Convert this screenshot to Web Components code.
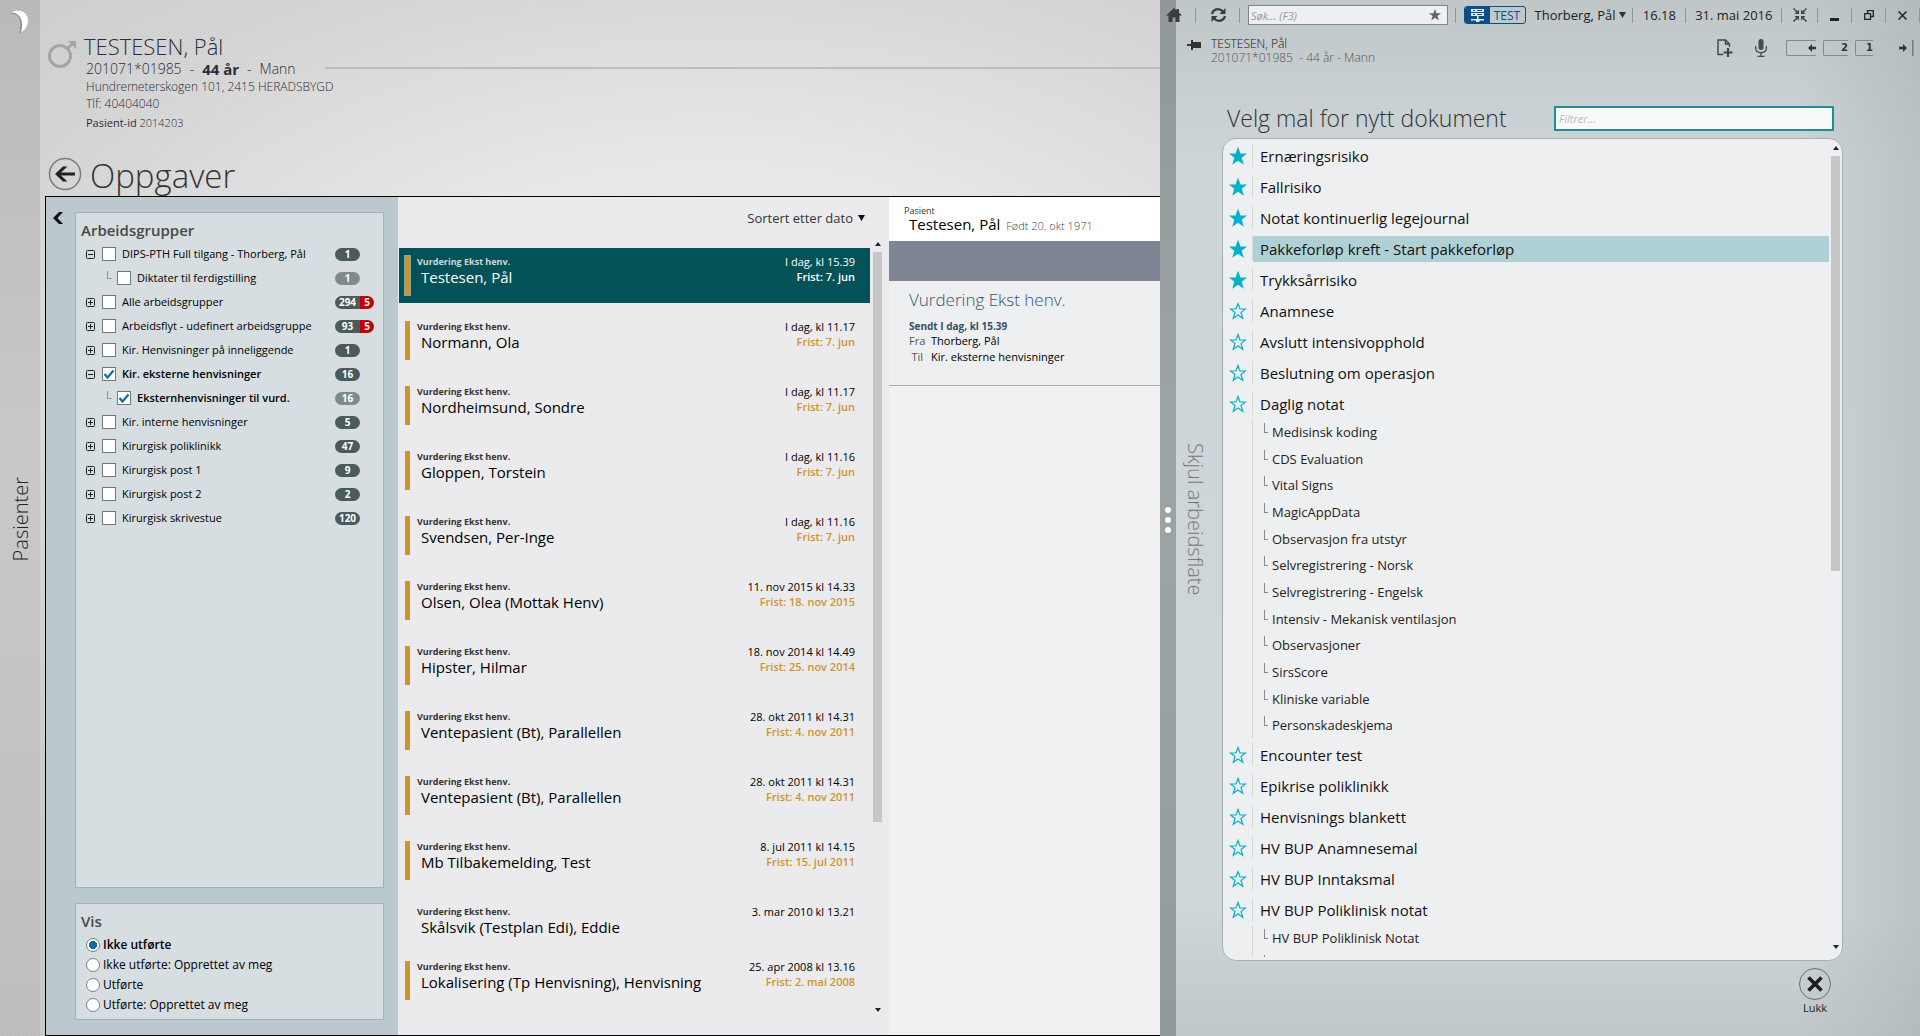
<!DOCTYPE html>
<html lang="no">
<head>
<meta charset="utf-8">
<title>Oppgaver</title>
<style>
html, body { height: 100%; margin: 0; }
body { font-family: "Open Sans", "Noto Sans", sans-serif; font-size: 11px; color: #000; overflow: hidden; }
</style>
</head>
<body>
<journal-app></journal-app>
<script>
const RESET = `
*, *::before, *::after { box-sizing: border-box; }
button, input { font: inherit; color: inherit; margin: 0; }
button { background: none; border: 0; padding: 0; text-align: left; cursor: pointer; }
a { color: inherit; text-decoration: none; }
svg { display: block; }
h1, h2, p { margin: 0; font-weight: inherit; font-size: inherit; }
`;
class Base extends HTMLElement {
  connectedCallback() {
    if (this.shadowRoot) return;
    this.attachShadow({ mode: 'open' }).innerHTML =
      `<style>${RESET}${this.css()}</style>${this.html()}`;
  }
  css() { return ':host{display:block}'; }
  html() { return '<slot></slot>'; }
  at(name) { return this.getAttribute(name) || ''; }
}
const DOTS = 'conic-gradient(from 270deg at 1px 1px, rgba(0,0,0,.05) 90deg, transparent 0) 0 0/4px 4px, conic-gradient(from 270deg at 1px 1px, rgba(0,0,0,.05) 90deg, transparent 0) 2px 2px/4px 4px';

/* ---- application shell ---- */
customElements.define('journal-app', class extends Base {
  css() { return `
    :host { display: grid; grid-template-columns: 40px minmax(0, 1fr) 16px 744px; height: 100vh; }
    main { display: flex; flex-direction: column; min-height: 0;
      background: ${DOTS}, radial-gradient(ellipse 1100px 600px at 60% 35%, #f0f0f0 0%, #e8e8e8 35%, #d6d6d6 68%, #cbcbcb 100%); }
    work-frame { flex: 1; min-height: 0; margin: 0 0 0 5px; }`; }
  html() { return `
    <side-rail label="Pasienter"></side-rail>
    <main>
      <patient-header></patient-header>
      <page-title>Oppgaver</page-title>
      <work-frame></work-frame>
    </main>
    <pane-splitter></pane-splitter>
    <document-pane></document-pane>`; }
});

customElements.define('side-rail', class extends Base {
  css() { return `
    :host { display: flex; flex-direction: column; background: ${DOTS}, linear-gradient(#bbbbbb, #cacaca 45%, #bfbfbf); }
    svg { margin: 9px 0 0 8px; }
    button { flex: 1; margin-bottom: 32px; width: 40px; display: flex; align-items: center; justify-content: center;
      font-size: 20px; font-weight: 300; line-height: 22px; color: #222; padding-left: 2px; }
    span { writing-mode: vertical-rl; transform: rotate(180deg); }`; }
  html() { return `
    <svg width="22" height="26" viewBox="0 0 22 26">
      <path d="M1 6C9 3 15 9 11 25C20 17 16 4 7 4Q3 4 1 6Z" fill="#8e9899"/>
      <path d="M4 3C10 0 20 2 20 11C20 17 17 21 13 23C16 15 14 5 4 3Z" fill="#fff"/>
    </svg>
    <button type="button"><span>${this.at('label')}</span></button>`; }
});

customElements.define('pane-splitter', class extends Base {
  css() { return `
    :host { display: flex; flex-direction: column; align-items: center; justify-content: center; gap: 4px; padding-top: 4px;
      background: linear-gradient(#92989a, #9da2a4 40%, #9ca2a4 60%, #94999b); }
    i { width: 6px; height: 6px; border-radius: 50%; background: #fff; }`; }
  html() { return '<i></i><i></i><i></i>'; }
});

/* ---- patient header ---- */
customElements.define('patient-header', class extends Base {
  css() { return `
    :host { display: grid; grid-template-columns: 44px auto 1fr; padding: 32px 0 0 0; color: #2c2c3a; font-weight: 400; }
    svg { margin: 7px 0 0 7px; }
    h2 { font-size: 22px; line-height: 28px; font-weight: 300; }
    .body { padding-left: 2px; }
    .id { display: flex; gap: 8px; font-size: 14px; line-height: 18px; font-weight: 300; }
    .id b { font-weight: 700; font-size: 15px; }
    .addr { font-size: 12px; line-height: 17px; font-weight: 300; }
    .pid { font-size: 11px; line-height: 18px; margin-top: 2px; font-weight: 300; }
    .pid b { font-weight: 400; }
    .rule { height: 2px; background: #bdbdbd; margin-top: 35px; margin-left: -9px; }`; }
  html() { return `
    <svg width="31" height="31" viewBox="0 0 31 31" fill="none" stroke="#a5a5a5">
      <circle cx="13" cy="17" r="10.500" stroke-width="3"/>
      <path d="M20.500 9.500L26 4" stroke-width="3"/><path d="M21 2H29V10Z" fill="#a5a5a5" stroke="none"/>
    </svg>
    <div>
      <h2>TESTESEN, Pål</h2>
      <div class="body">
        <div class="id"><span>201071*01985</span><span>-</span><b>44 år</b><span>-</span><span>Mann</span></div>
        <p class="addr">Hundremeterskogen 101, 2415 HERADSBYGD</p>
        <p class="addr">Tlf: 40404040</p>
        <p class="pid"><b>Pasient-id</b> 2014203</p>
      </div>
    </div>
    <div class="rule"></div>`; }
});

customElements.define('page-title', class extends Base {
  css() { return `
    :host { display: flex; align-items: flex-start; gap: 8px; height: 64px; padding: 25px 0 0 8px; overflow: hidden; color: #333; }
    h1 { font-size: 33px; line-height: 38px; font-weight: 300; }`; }
  html() { return `
    <button type="button" aria-label="Tilbake">
      <svg width="34" height="34" viewBox="0 0 34 34"><circle cx="17" cy="17" r="15.500" fill="none" stroke="#7a7a7a" stroke-width="1.500"/>
      <path d="M7 17L15 9.500H19.500L13 15.500H27V18.500H13L19.500 24.500H15Z" fill="#222"/></svg>
    </button>
    <h1><slot></slot></h1>`; }
});

/* ---- framed task area ---- */
customElements.define('work-frame', class extends Base {
  css() { return `
    :host { display: grid; grid-template-columns: 352px 491px minmax(0, 1fr); grid-template-rows: minmax(0, 1fr);
      border: 1px solid #000; border-right: 0; background: #ebebed; }`; }
  html() { return '<filter-bar></filter-bar><task-list></task-list><task-detail></task-detail>'; }
});

customElements.define('filter-bar', class extends Base {
  css() { return `
    :host { display: flex; background: #bbc9ce; padding: 15px 14px 15px 7px; gap: 12px; min-height: 0; }
    .stack { flex: 1; display: flex; flex-direction: column; gap: 15px; }
    card-box:first-child { flex: 1; }
    .close { align-self: flex-start; width: 10px; }
    .tree { padding-top: 2px; }`; }
  html() {
    const g = [['-', 'DIPS-PTH Full tilgang - Thorberg, Pål', 1], ['c', 'Diktater til ferdigstilling', 1],
      ['+', 'Alle arbeidsgrupper', 294, 5], ['+', 'Arbeidsflyt - udefinert arbeidsgruppe', 93, 5],
      ['+', 'Kir. Henvisninger på inneliggende', 1], ['-', 'Kir. eksterne henvisninger', 16, '', 1],
      ['c', 'Eksternhenvisninger til vurd.', 16, '', 1], ['+', 'Kir. interne henvisninger', 5],
      ['+', 'Kirurgisk poliklinikk', 47], ['+', 'Kirurgisk post 1', 9], ['+', 'Kirurgisk post 2', 2], ['+', 'Kirurgisk skrivestue', 120]];
    const r = ['Ikke utførte', 'Ikke utførte: Opprettet av meg', 'Utførte', 'Utførte: Opprettet av meg'];
    return `
    <button class="close" type="button" aria-label="Skjul filter"><svg width="10" height="12" viewBox="0 0 10 12"><path d="M0 6L6 0H10L4.500 6L10 12H6Z" fill="#111"/></svg></button>
    <div class="stack">
      <card-box heading="Arbeidsgrupper"><div class="tree">${g.map(x =>
        `<group-row kind="${x[0]}" label="${x[1]}" count="${x[2]}" alert="${x[3] || ''}" ${x[4] ? 'checked' : ''}></group-row>`).join('')}</div></card-box>
      <card-box heading="Vis"><view-choice options="${r.join('|')}"></view-choice></card-box>
    </div>`; }
});

customElements.define('card-box', class extends Base {
  css() { return `
    :host { display: block; background: #d6dee1; border: 1px solid #a4b1b5; padding: 7px 5px 0; }
    h2 { font-size: 15px; line-height: 20px; font-weight: 600; color: #484848; }`; }
  html() { return `<h2>${this.at('heading')}</h2><slot></slot>`; }
});

customElements.define('group-row', class extends Base {
  css() { return `
    :host { display: flex; align-items: center; height: 24px; padding-left: 5px; font-size: 11px; line-height: 16px; }
    :host([checked]) label { font-weight: 600; }
    .exp { width: 9px; height: 9px; margin-right: 7px; }
    .corner { width: 5px; height: 8px; border: solid #8a9497; border-width: 0 0 1px 1px; margin: 0 5px 6px 21px; }
    label { display: flex; align-items: center; gap: 6px; width: 233px; white-space: nowrap; }
    .child label { width: 218px; }
    .row { display: flex; align-items: center; }
    input { appearance: none; width: 14px; height: 14px; background: #fff; border: 1px solid #6f7a7e; flex: none; }
    input:checked { background: #fff url("data:image/svg+xml,%3Csvg xmlns='http://www.w3.org/2000/svg' viewBox='0 0 12 12'%3E%3Cpath d='M1.500 6L4.500 9.500L10.500 2.500' fill='none' stroke='%230b6fa0' stroke-width='2.200'/%3E%3C/svg%3E"); }
    .pill { display: flex; border-radius: 7px; overflow: hidden; color: #fff; font-weight: 700; font-size: 10px; line-height: 13px; text-align: center; }
    .pill span { min-width: 25px; background: #4a5b5c; }
    .child .pill span { background: #7f8c8e; }
    .pill em { font-style: normal; width: 14px; background: #c40000; }`; }
  html() {
    const k = this.at('kind'), c = k === 'c';
    return `<div class="row ${c ? 'child' : ''}">${c ? '<span class="corner"></span>' :
      `<button class="exp" type="button" aria-label="Utvid"><svg width="9" height="9" viewBox="0 0 9 9" fill="none" stroke="#222"><rect x=".5" y=".5" width="8" height="8" rx="1"/><path d="M2 4.500H7${k === '+' ? 'M4.500 2V7' : ''}"/></svg></button>`}
      <label><input type="checkbox" ${this.hasAttribute('checked') ? 'checked' : ''}>${this.at('label')}</label>
      <span class="pill"><span>${this.at('count')}</span>${this.at('alert') ? `<em>${this.at('alert')}</em>` : ''}</span></div>`; }
});

customElements.define('view-choice', class extends Base {
  css() { return `
    :host { display: block; padding: 4px 0 4px 5px; }
    label { display: flex; align-items: center; gap: 3px; height: 20px; font-size: 12px; line-height: 18px; }
    label:has(:checked) { font-weight: 600; }
    input { appearance: none; width: 14px; height: 14px; border: 1px solid #767f83; border-radius: 50%; background: #fff; }
    input:checked { background: radial-gradient(circle, #0b6fa0 0 3px, #0b6fa0 4px, #fff 4px); }`; }
  html() { return this.at('options').split('|').map((o, i) =>
    `<label><input type="radio" name="vis" ${i ? '' : 'checked'}>${o}</label>`).join(''); }
});

/* ---- scrollbar strip ---- */
customElements.define('scroll-strip', class extends Base {
  css() { return `
    :host { display: flex; flex-direction: column; align-items: center; width: 9px; }
    .track { flex: 1; align-self: stretch; margin: 6px 0; }
    .thumb { height: var(--thumb, 50%); background: #c6c6c6; }
    svg { flex: none; }`; }
  html() { return `<svg width="6" height="4" viewBox="0 0 6 4"><path d="M0 4L3 0L6 4Z" fill="#222"/></svg>
    <div class="track"><div class="thumb"></div></div>
    <svg width="6" height="4" viewBox="0 0 6 4"><path d="M0 0L3 4L6 0Z" fill="#222"/></svg>`; }
});

/* ---- task list ---- */
customElements.define('task-list', class extends Base {
  css() { return `
    :host { display: flex; flex-direction: column; background: #ebebed; min-height: 0; }
    .sort { align-self: flex-end; margin: 11px 24px 0 0; display: flex; align-items: center; gap: 5px; font-size: 13px; line-height: 20px; color: #333; font-weight: 400; }
    .wrap { flex: 1; display: flex; min-height: 0; margin-top: 12px; }
    .items { flex: 1; padding-top: 8px; overflow: hidden; }
    scroll-strip { --thumb: 76%; margin: 2px 7px 23px 3px; }`; }
  html() {
    const t = [['Testesen, Pål', 'I dag, kl 15.39', '7. jun'], ['Normann, Ola', 'I dag, kl 11.17', '7. jun'],
      ['Nordheimsund, Sondre', 'I dag, kl 11.17', '7. jun'], ['Gloppen, Torstein', 'I dag, kl 11.16', '7. jun'],
      ['Svendsen, Per-Inge', 'I dag, kl 11.16', '7. jun'], ['Olsen, Olea (Mottak Henv)', '11. nov 2015 kl 14.33', '18. nov 2015'],
      ['Hipster, Hilmar', '18. nov 2014 kl 14.49', '25. nov 2014'], ['Ventepasient (Bt), Parallellen', '28. okt 2011 kl 14.31', '4. nov 2011'],
      ['Ventepasient (Bt), Parallellen', '28. okt 2011 kl 14.31', '4. nov 2011'], ['Mb Tilbakemelding, Test', '8. jul 2011 kl 14.15', '15. jul 2011'],
      ['Skålsvik (Testplan Edi), Eddie', '3. mar 2010 kl 13.21', ''], ['Lokalisering (Tp Henvisning), Henvisning', '25. apr 2008 kl 13.16', '2. mai 2008']];
    return `<button class="sort" type="button">Sortert etter dato <svg width="7" height="6" viewBox="0 0 7 6"><path d="M0 0H7L3.500 6Z" fill="#111"/></svg></button>
    <div class="wrap"><div class="items">${t.map((x, i) =>
      `<task-item name="${x[0]}" when="${x[1]}" due="${x[2]}" ${i ? '' : 'selected'}></task-item>`).join('')}</div>
    <scroll-strip></scroll-strip></div>`; }
});

customElements.define('task-item', class extends Base {
  css() { return `
    :host { display: block; margin: 0 0 10px 1px; }
    :host([due=""]) { margin-bottom: 0; }
    button { display: grid; grid-template-columns: 18px 1fr auto; width: 100%; height: 55px; padding: 0 15px 0 0; align-items: start; }
    .bar { width: 5px; height: 39px; margin: 8px 0 0 6px; background: #cf9429; }
    :host([due=""]) .bar { visibility: hidden; }
    .l { padding-top: 8px; }
    .kind { display: block; font-size: 9px; line-height: 12px; font-weight: 700; color: #333; }
    .name { display: block; font-size: 15px; line-height: 18px; padding-left: 4px; white-space: nowrap; }
    .r { padding-top: 6px; text-align: right; font-size: 11px; line-height: 15px; white-space: nowrap; }
    .due { display: block; color: #cf9429; font-weight: 600; }
    :host([selected]) button { background: #035257; color: #fff; }
    :host([selected]) .kind { color: #c9dcde; }
    :host([selected]) .due { color: #fff; }
    :host([selected]) .bar { box-shadow: 0 0 0 1px #8fa59a; }`; }
  html() { return `<button type="button"><span class="bar"></span>
    <span class="l"><span class="kind">Vurdering Ekst henv.</span><span class="name">${this.at('name')}</span></span>
    <span class="r">${this.at('when')}${this.at('due') ? `<span class="due">Frist: ${this.at('due')}</span>` : ''}</span></button>`; }
});

/* ---- task detail ---- */
customElements.define('task-detail', class extends Base {
  css() { return `
    :host { display: flex; flex-direction: column; background: #f1f1f1; white-space: nowrap; overflow: hidden; }
    header { background: #fff; height: 44px; padding: 8px 0 0 15px; }
    header small { display: block; font-size: 9px; line-height: 11px; color: #333; }
    header p { padding-left: 5px; font-size: 15px; line-height: 16px; }
    header span { font-size: 11px; font-weight: 300; color: #444; margin-left: 2px; }
    .band { height: 40px; background: #7f8595; }
    section { height: 105px; background: #eeeff1; border-bottom: 1px solid #a6acb2; padding: 7px 0 0 20px; }
    h2 { font-size: 17px; line-height: 24px; font-weight: 300; color: #2f5571; }
    .sent { font-size: 10px; line-height: 14px; margin-top: 7px; font-weight: 700; color: #33506a; }
    dl { margin: 0; display: grid; grid-template-columns: 14px auto; column-gap: 8px; font-size: 11px; line-height: 16px; }
    dt { text-align: right; color: #555; } dd { margin: 0; }`; }
  html() { return `
    <header><small>Pasient</small><p>Testesen, Pål <span>Født 20. okt 1971</span></p></header>
    <div class="band"></div>
    <section><h2>Vurdering Ekst henv.</h2><p class="sent">Sendt I dag, kl 15.39</p>
    <dl><dt>Fra</dt><dd>Thorberg, Pål</dd><dt>Til</dt><dd>Kir. eksterne henvisninger</dd></dl></section>`; }
});

/* ---- right pane ---- */
customElements.define('document-pane', class extends Base {
  css() { return `
    :host { display: flex; flex-direction: column; min-height: 0;
      background: linear-gradient(90deg, transparent 84%, rgba(165,172,174,.45) 100%), linear-gradient(#c0c7c9 0, #cdd5d8 16%, #cdd6d8 88%, #c0c8c9 100%); }
    .mid { flex: 1; display: grid; grid-template-columns: 46px 1fr; min-height: 0; }
    .hide { display: flex; justify-content: center; align-items: center; font-size: 20px; line-height: 24px; font-weight: 300; color: #777; padding-right: 8px; padding-bottom: 70px; }
    .hide span { writing-mode: vertical-rl; }
    .col { display: flex; flex-direction: column; min-height: 0; padding-right: 77px; }
    .head { display: flex; justify-content: space-between; align-items: center; padding: 0 9px 0 5px; height: 65px; }
    h1 { font-size: 23px; line-height: 32px; font-weight: 300; color: #333; padding-top: 24px; }
    .filter { width: 280px; height: 25px; margin-top: 25px; border: 2px solid #1f8e95; background: #f8faf9; padding: 0 3px; font-size: 11px; border-radius: 0; }
    .filter::placeholder { color: #b9b9b9; font-style: italic; }
    template-list { flex: 1; min-height: 0; }
    .close { align-self: flex-end; margin: 6px 11px 0 0; height: 69px; display: flex; flex-direction: column; align-items: center; font-size: 11px; line-height: 14px; color: #222; font-weight: 400; }`; }
  html() { return `
    <top-bar></top-bar>
    <context-bar></context-bar>
    <div class="mid">
      <button class="hide" type="button"><span>Skjul arbeidsflate</span></button>
      <div class="col">
        <div class="head"><h1>Velg mal for nytt dokument</h1><input class="filter" type="text" placeholder="Filtrer..." aria-label="Filtrer"></div>
        <template-list></template-list>
        <button class="close" type="button"><svg width="34" height="34" viewBox="0 0 34 34"><circle cx="17" cy="17" r="15.500" fill="none" stroke="#6a6f71"/><path d="M10.500 10.500L23.500 23.500M23.500 10.500L10.500 23.500" stroke="#1c1c1c" stroke-width="3.600"/></svg>Lukk</button>
      </div>
    </div>`; }
});

customElements.define('top-bar', class extends Base {
  css() { return `
    :host { display: flex; align-items: center; height: 30px; margin-left: -10px; position: relative; color: #222; font-size: 13px; font-weight: 400; white-space: nowrap; }
    hr { width: 1px; height: 15px; border: 0; background: #8f9799; margin: 0; flex: none; }
    .search { display: flex; align-items: center; width: 200px; height: 20px; border: 1px solid #7f8688; background: #edeff0; padding: 0 6px 0 2px; margin: 0 7px 0 8px; }
    input { flex: 1; min-width: 0; border: 0; background: none; padding: 0; font-size: 11px; height: 18px; outline: 0; }
    input::placeholder { color: #999; font-style: italic; }
    .test { display: flex; width: 62px; height: 18px; border: 1px solid #0a4f86; border-radius: 3px; overflow: hidden; margin: 0 9px 0 8px; color: #0a4f86; font-size: 12px; line-height: 17px; font-weight: 500; }
    .test svg { flex: none; background: #0a4f86; margin-right: 4px; }
    .user { display: flex; align-items: center; justify-content: space-between; width: 92px; margin-right: 6px; font-size: 13px; }
    .time { width: 52px; text-align: center; } .date { width: 95px; text-align: center; }
    .home { margin-right: 13px; } .sync { margin: 0 12px 0 14px; }
    .w { width: 33px; display: flex; justify-content: center; } .wide { width: 35px; }`; }
  html() { return `
    <a class="home" href="#" aria-label="Hjem"><svg width="16" height="14" viewBox="0 0 16 14" fill="#3c3c3c"><path d="M8 0L0 7.500H2.500V14H6.500V9.500H9.500V14H13.500V7.500H16L13 4.500V1H10.500V2.300Z"/></svg></a><hr>
    <button class="sync" type="button" aria-label="Oppdater"><svg width="17" height="16" viewBox="0 0 17 16" fill="none" stroke="#3c3c3c" stroke-width="2.200"><path d="M2 7C3 2 9 .5 13 4.500M15 9C14 14 8 15.500 4 11.500"/><path d="M15.500 1V7H9.500ZM1.500 15V9H7.500Z" fill="#3c3c3c" stroke="none"/></svg></button><hr>
    <div class="search"><input type="search" placeholder="Søk... (F3)" aria-label="Søk"><svg width="12" height="12" viewBox="0 0 24 24" fill="#666"><path d="M12 0L15 8.500H24L17 14L19.500 23L12 17.500L4.500 23L7 14L0 8.500H9Z"/></svg></div><hr>
    <button class="test" type="button"><svg width="25" height="16" viewBox="0 0 25 16" fill="#dfe9f0"><path d="M6 2H19V5H6ZM6 6H19V9H6ZM12 9H13.500V12H19V13.500H14.500V15H11V13.500H6V12H12Z"/><path d="M8 3H10V4H8ZM12 3H17V4H12ZM8 7H10V8H8ZM12 7H17V8H12Z" fill="#0a4f86"/></svg>TEST</button>
    <button class="user" type="button">Thorberg, Pål <svg width="7" height="6" viewBox="0 0 7 6"><path d="M0 0H7L3.500 6Z" fill="#333"/></svg></button><hr>
    <span class="time">16.18</span><hr><span class="date">31. mai 2016</span><hr>
    <button class="w wide" type="button" aria-label="Samle"><svg width="14" height="14" viewBox="0 0 14 14" fill="none" stroke="#444" stroke-width="1.500"><path d="M.5 .5L4.500 4.500M13.500 .5L9.500 4.500M.5 13.500L4.500 9.500M13.500 13.500L9.500 9.500"/><path d="M6 1.500V6H1.500ZM8 1.500V6H12.500ZM6 12.500V8H1.500ZM8 12.500V8H12.500Z" fill="#444" stroke="none"/></svg></button><hr>
    <button class="w" type="button" aria-label="Minimer"><svg width="9" height="11" viewBox="0 0 9 11"><path d="M0 8H9V11H0Z" fill="#222"/></svg></button><hr>
    <button class="w" type="button" aria-label="Gjenopprett"><svg width="10" height="10" viewBox="0 0 10 10" fill="none" stroke="#222" stroke-width="1.300"><path d="M.7 3.700H6.500V9.300H.7ZM3.500 3.500V.7H9.300V6.500H6.700"/></svg></button><hr>
    <button class="w" type="button" aria-label="Lukk vindu"><svg width="9" height="9" viewBox="0 0 9 9" stroke="#222" stroke-width="1.500"><path d="M.5 .5L8.500 8.500M8.500 .5L.5 8.500"/></svg></button><hr>`; }
});

customElements.define('context-bar', class extends Base {
  css() { return `
    :host { display: flex; align-items: flex-start; height: 43px; padding: 7px 6px 0 11px; font-size: 12px; line-height: 14px; color: #333; white-space: nowrap; }
    .pin { margin: 3px 10px 0 0; }
    .who { flex: 1; font-weight: 300; color: #111; } .who p + p { color: #555; }
    .tools { display: flex; align-items: center; height: 22px; }
    .mic { margin: 0 19px 0 22px; }
    .slot { display: flex; align-items: center; justify-content: flex-end; height: 16px; border: 1px solid #84898b; border-right: 0; border-radius: 2px 0 0 2px; font: 700 10px/14px "DejaVu Sans", sans-serif; margin-right: 7px; }
    .wide { width: 30px; } .two { width: 25px; } .one { width: 18px; }
    .end { margin-left: 19px; }`; }
  html() { return `
    <button class="pin" type="button" aria-label="Fest"><svg width="14" height="10" viewBox="0 0 14 10" fill="#333"><path d="M0 4H4V0H6V2H14V8H6V10H4V6H0Z"/></svg></button>
    <div class="who"><p>TESTESEN, Pål</p><p>201071*01985 &nbsp;- 44 år - Mann</p></div>
    <div class="tools">
      <button type="button" aria-label="Nytt dokument"><svg width="16" height="18" viewBox="0 0 16 18" fill="none" stroke="#444" stroke-width="1.400"><path d="M6 15.500H1V1H8.500L12.500 5V8M8.500 1V5H12.500"/><path d="M11 9V18M6.500 13.500H15.500" stroke-width="2.200"/></svg></button>
      <button class="mic" type="button" aria-label="Diktat"><svg width="12" height="18" viewBox="0 0 12 18" fill="none" stroke="#4a4a4a" stroke-width="1.300"><rect x="3.500" y="0" width="5" height="11" rx="2.500" fill="#4a4a4a" stroke="none"/><path d="M.7 7V9.500C.7 15 11.300 15 11.300 9.500V7M6 13.500V17M2.500 17.300H9.500"/></svg></button>
      <button class="slot wide" type="button" aria-label="Venstre"><svg width="8" height="8" viewBox="0 0 8 8" fill="#333"><path d="M0 4L4 0V2.800H8V5.200H4V8Z"/></svg></button>
      <button class="slot two" type="button">2</button>
      <button class="slot one" type="button">1</button>
      <button class="end" type="button" aria-label="Høyre"><svg width="15" height="16" viewBox="0 0 15 16" fill="#333"><path d="M8 8L4 4V6.800H0V9.200H4V12Z"/><path d="M13 0H14.500V16H13Z" fill="#777"/></svg></button>
    </div>`; }
});

customElements.define('template-list', class extends Base {
  css() { return `
    :host { display: flex; background: #eeeff1; border: 1px solid #a3b1b4; border-radius: 14px; padding: 1px 2px 3px 6px; }
    .rows { flex: 1; overflow: hidden; min-height: 0; }
    .subs { display: grid; grid-auto-rows: 1fr; }
    .full { height: 320px; }
    scroll-strip { --thumb: 53%; margin: 6px 0 8px 2px; }`; }
  html() {
    const row = (n, a = '') => `<template-row label="${n}" ${a}></template-row>`;
    const sub = n => `<template-sub>${n}</template-sub>`;
    return `<div class="rows">
      ${['Ernæringsrisiko', 'Fallrisiko', 'Notat kontinuerlig legejournal'].map(n => row(n, 'fav')).join('')}
      ${row('Pakkeforløp kreft - Start pakkeforløp', 'fav selected')}${row('Trykksårrisiko', 'fav')}
      ${['Anamnese', 'Avslutt intensivopphold', 'Beslutning om operasjon', 'Daglig notat'].map(n => row(n)).join('')}
      <div class="subs full">${['Medisinsk koding', 'CDS Evaluation', 'Vital Signs', 'MagicAppData', 'Observasjon fra utstyr', 'Selvregistrering - Norsk', 'Selvregistrering - Engelsk', 'Intensiv - Mekanisk ventilasjon', 'Observasjoner', 'SirsScore', 'Kliniske variable', 'Personskadeskjema'].map(sub).join('')}</div>
      ${['Encounter test', 'Epikrise poliklinikk', 'Henvisnings blankett', 'HV BUP Anamnesemal', 'HV BUP Inntaksmal', 'HV BUP Poliklinisk notat'].map(n => row(n)).join('')}
      <div class="subs">${sub('HV BUP Poliklinisk Notat')}${sub('')}</div>
    </div><scroll-strip></scroll-strip>`; }
});

customElements.define('template-row', class extends Base {
  css() { return `
    :host { display: flex; align-items: center; height: 31px; font-size: 15px; line-height: 22px; }
    .star { width: 23px; display: flex; justify-content: flex-start; }
    .line { width: 1px; height: 23px; background: #d5d7d9; }
    .name { flex: 1; height: 26px; padding-left: 7px; color: #111; }
    :host([selected]) .name { background: #afd1d5; }`; }
  html() {
    const fill = this.hasAttribute('fav') ? '#05b2cd' : 'none';
    return `<button class="star" type="button" aria-label="Favoritt"><svg width="18" height="18" viewBox="0 0 18 18" fill="${fill}" stroke="#05b2cd" stroke-width="1.200"><path d="M9 1.500L11 7H16.500L12 10.500L13.700 16.300L9 13L4.300 16.300L6 10.500L1.500 7H7Z"/></svg></button><span class="line"></span><button class="name" type="button">${this.at('label')}</button>`; }
});

customElements.define('template-sub', class extends Base {
  css() { return `
    :host { display: flex; align-items: flex-start; min-height: 26px; margin-left: 23px; border-left: 1px solid #d5d7d9; padding-left: 11px; font-size: 13px; line-height: 20px; color: #222; }
    i { width: 4px; height: 10px; border: solid #8a8a8a; border-width: 0 0 1px 1px; margin: 4px 4px 0 0; }
    button { padding-top: 3px; font-weight: 400; }`; }
  html() { return '<i></i><button type="button"><slot></slot></button>'; }
});
</script>
</body>
</html>
